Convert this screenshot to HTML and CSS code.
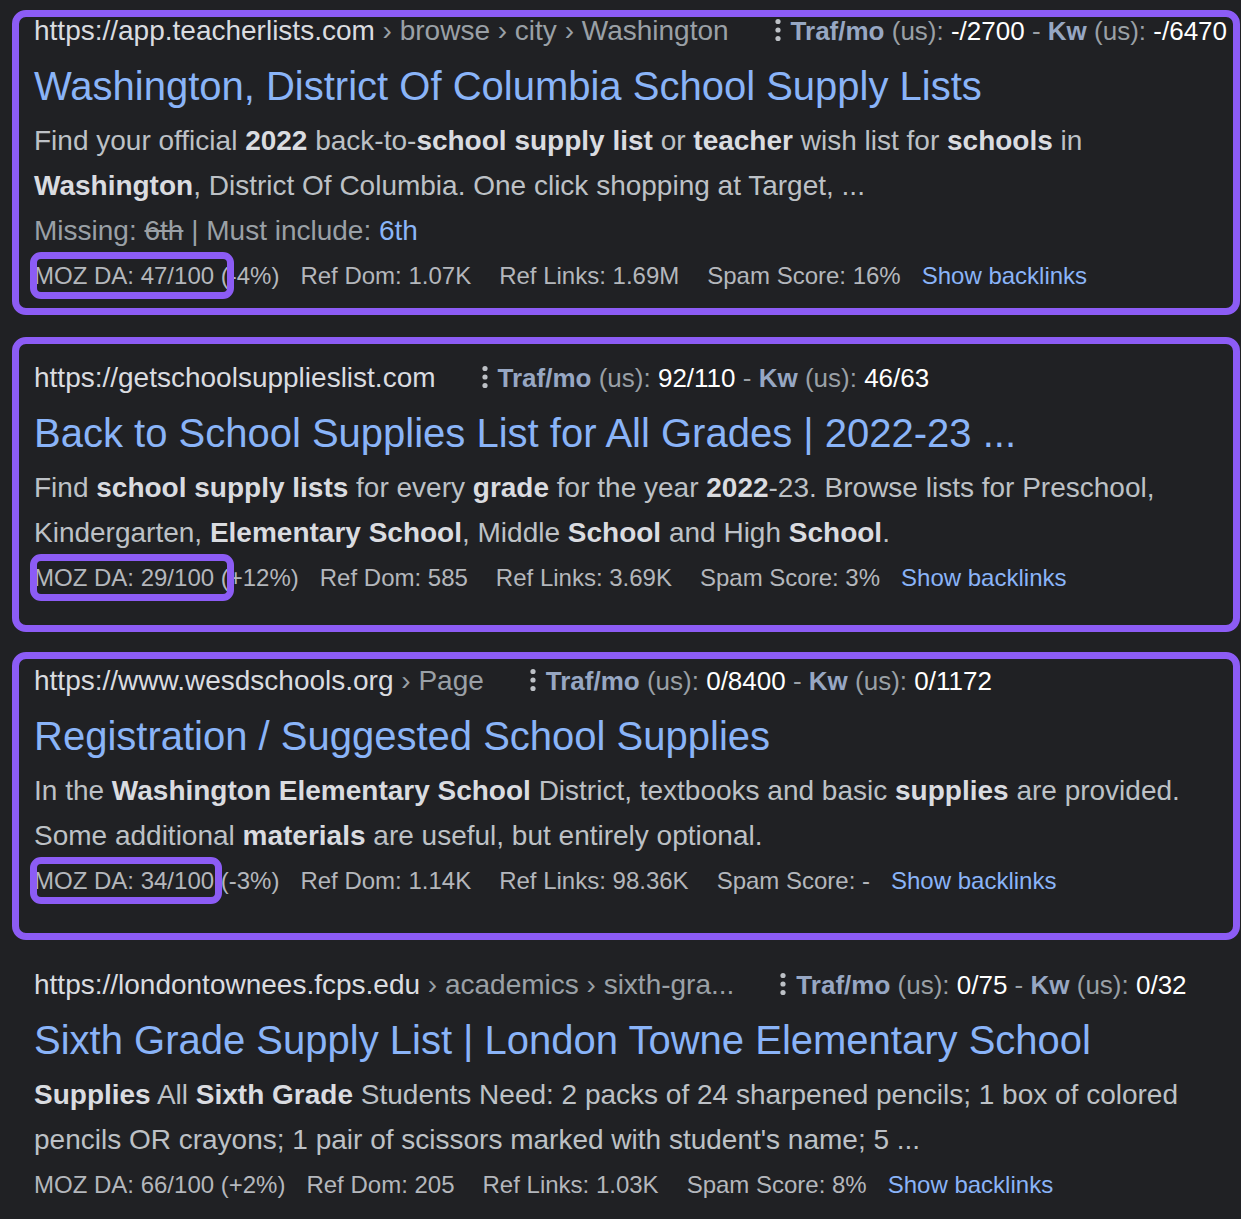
FILE: index.html
```html
<!DOCTYPE html>
<html lang="en">
<head>
  <meta charset="UTF-8">
  <title>school supply lists - search results</title>
  <link rel="stylesheet" href="styles.css">
</head>
<body>
  <div class="results">

    <div class="result result-marked result-first">
      <div class="url-line">
        <span class="domain">https://app.teacherlists.com</span><span class="crumbs"> › browse › city › Washington</span>
        <span class="traf"><svg class="dots" width="6" height="24" viewBox="0 0 6 24"><circle cx="3" cy="3.5" r="2.6"/><circle cx="3" cy="12" r="2.6"/><circle cx="3" cy="20.5" r="2.6"/></svg><b>Traf/mo</b> <span class="us">(us):</span> <span class="num">-/2700</span> <span class="us">-</span> <b>Kw</b> <span class="us">(us):</span> <span class="num">-/6470</span></span>
      </div>
      <h3 class="title">Washington, District Of Columbia School Supply Lists</h3>
      <p class="snippet">Find your official <b>2022</b> back-to-<b>school supply list</b> or <b>teacher</b> wish list for <b>schools</b> in <b>Washington</b>, District Of Columbia. One click shopping at Target, ...</p>
      <div class="missing">Missing: <s>6th</s> | Must include: <span class="must">6th</span></div>
      <div class="meta">
        <span class="moz"><span class="moz-da">MOZ DA: 47/100</span> (-4%)</span>
        <span class="stat">Ref Dom: 1.07K</span>
        <span class="stat">Ref Links: 1.69M</span>
        <span class="spam">Spam Score: 16%</span>
        <a class="backlinks" href="#">Show backlinks</a>
      </div>
    </div>

    <div class="result result-marked result-second">
      <div class="url-line">
        <span class="domain">https://getschoolsupplieslist.com</span>
        <span class="traf"><svg class="dots" width="6" height="24" viewBox="0 0 6 24"><circle cx="3" cy="3.5" r="2.6"/><circle cx="3" cy="12" r="2.6"/><circle cx="3" cy="20.5" r="2.6"/></svg><b>Traf/mo</b> <span class="us">(us):</span> <span class="num">92/110</span> <span class="us">-</span> <b>Kw</b> <span class="us">(us):</span> <span class="num">46/63</span></span>
      </div>
      <h3 class="title">Back to School Supplies List for All Grades | 2022-23 ...</h3>
      <p class="snippet">Find <b>school supply lists</b> for every <b>grade</b> for the year <b>2022</b>-23. Browse lists for Preschool, Kindergarten, <b>Elementary School</b>, Middle <b>School</b> and High <b>School</b>.</p>
      <div class="meta">
        <span class="moz"><span class="moz-da">MOZ DA: 29/100</span> (+12%)</span>
        <span class="stat">Ref Dom: 585</span>
        <span class="stat">Ref Links: 3.69K</span>
        <span class="spam">Spam Score: 3%</span>
        <a class="backlinks" href="#">Show backlinks</a>
      </div>
    </div>

    <div class="result result-marked result-third">
      <div class="url-line">
        <span class="domain">https://www.wesdschools.org</span><span class="crumbs"> › Page</span>
        <span class="traf"><svg class="dots" width="6" height="24" viewBox="0 0 6 24"><circle cx="3" cy="3.5" r="2.6"/><circle cx="3" cy="12" r="2.6"/><circle cx="3" cy="20.5" r="2.6"/></svg><b>Traf/mo</b> <span class="us">(us):</span> <span class="num">0/8400</span> <span class="us">-</span> <b>Kw</b> <span class="us">(us):</span> <span class="num">0/1172</span></span>
      </div>
      <h3 class="title">Registration / Suggested School Supplies</h3>
      <p class="snippet">In the <b>Washington Elementary School</b> District, textbooks and basic <b>supplies</b> are provided. Some additional <b>materials</b> are useful, but entirely optional.</p>
      <div class="meta">
        <span class="moz"><span class="moz-da moz-da-tight">MOZ DA: 34/100</span> (-3%)</span>
        <span class="stat">Ref Dom: 1.14K</span>
        <span class="stat">Ref Links: 98.36K</span>
        <span class="spam">Spam Score: -</span>
        <a class="backlinks" href="#">Show backlinks</a>
      </div>
    </div>

    <div class="result result-plain">
      <div class="url-line">
        <span class="domain">https://londontownees.fcps.edu</span><span class="crumbs"> › academics › sixth-gra...</span>
        <span class="traf"><svg class="dots" width="6" height="24" viewBox="0 0 6 24"><circle cx="3" cy="3.5" r="2.6"/><circle cx="3" cy="12" r="2.6"/><circle cx="3" cy="20.5" r="2.6"/></svg><b>Traf/mo</b> <span class="us">(us):</span> <span class="num">0/75</span> <span class="us">-</span> <b>Kw</b> <span class="us">(us):</span> <span class="num">0/32</span></span>
      </div>
      <h3 class="title">Sixth Grade Supply List | London Towne Elementary School</h3>
      <p class="snippet"><b>Supplies</b> All <b>Sixth Grade</b> Students Need: 2 packs of 24 sharpened pencils; 1 box of colored pencils OR crayons; 1 pair of scissors marked with student's name; 5 ...</p>
      <div class="meta">
        <span class="moz">MOZ DA: 66/100 (+2%)</span>
        <span class="stat">Ref Dom: 205</span>
        <span class="stat">Ref Links: 1.03K</span>
        <span class="spam">Spam Score: 8%</span>
        <a class="backlinks" href="#">Show backlinks</a>
      </div>
    </div>

  </div>
</body>
</html>
```

FILE: styles.css
```css
body {
  margin: 0;
  background: #202124;
  font-family: 'Liberation Sans', Arial, sans-serif;
  color: #bdc1c6;
}

.results {
  padding: 10px 1px 0 12px;
}

/* each search result, the marked ones get a purple frame */
.result {
  border: 7px solid transparent;
  border-radius: 14px;
  padding: 0 15px;
}

.result-marked {
  border-color: #8c5cf5;
}

.result-first {
  padding-top: 0;
  padding-bottom: 10px;
}

.result-second {
  margin-top: 22px;
  padding-top: 20px;
  padding-bottom: 25px;
}

.result-third {
  margin-top: 20px;
  padding-top: 8px;
  padding-bottom: 30px;
}

.result-plain {
  margin-top: 24px;
}

.url-line {
  display: flex;
  align-items: center;
  white-space: nowrap;
  height: 28px;
  font-size: 28px;
  line-height: 28px;
}

.domain {
  color: #dadce0;
}

.crumbs {
  color: #9aa0a6;
  white-space: pre;
}

.traf {
  display: block;
  margin-left: 46px;
  font-size: 26px;
  color: #9aa0a6;
}

.dots {
  fill: #bdc1c6;
  margin-right: 10px;
  vertical-align: -2px;
}

.traf b {
  color: #97a7c3;
}

.traf .num {
  color: #ffffff;
}

.title {
  margin: 9px 0 0;
  font-size: 40px;
  line-height: 64px;
  font-weight: normal;
  color: #8ab4f8;
  white-space: nowrap;
}

.snippet {
  margin: 0;
  font-size: 28px;
  line-height: 45px;
  color: #bdc1c6;
  max-width: 1184px;
}

.snippet b {
  color: #dadce0;
}

.missing {
  font-size: 28px;
  line-height: 45px;
  color: #9aa0a6;
}

.missing .must {
  color: #8ab4f8;
}

.meta {
  display: flex;
  font-size: 24px;
  line-height: 45px;
  color: #b4b7bc;
  white-space: nowrap;
}

.moz {
  margin-right: 21px;
}

.stat {
  margin-right: 28px;
}

.spam {
  margin-right: 21px;
}

.backlinks {
  color: #8ab4f8;
  text-decoration: none;
}

.moz-da {
  position: relative;
  display: inline-block;
}

.moz-da::after {
  content: '';
  position: absolute;
  top: -1px;
  bottom: -1px;
  left: -4px;
  right: -20px;
  border: 7px solid #8c5cf5;
  border-radius: 11px;
}

.moz-da-tight::after {
  right: -8px;
}
```
